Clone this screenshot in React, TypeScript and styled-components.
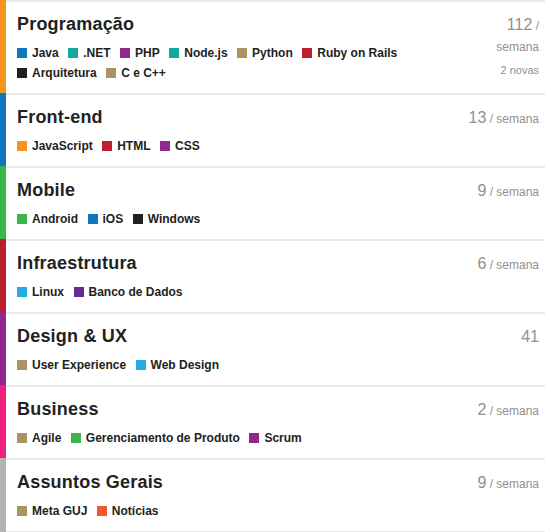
import { FC } from 'react';
import styled, { createGlobalStyle } from 'styled-components';

const GlobalStyle = createGlobalStyle`
    body {
        margin: 0;
        background: #fff;
        font-family: 'Liberation Sans', Arial, sans-serif;
        color: #222;
    }
`;

type ITag = { name: string; color: string };

type ICategory = {
    name: string;
    color: string;
    count: string;
    perWeek: boolean;
    news?: string;
    tags: ITag[];
};

const categories: ICategory[] = [
    {
        name: 'Programação',
        color: '#F7941D',
        count: '112',
        perWeek: true,
        news: '2 novas',
        tags: [
            { name: 'Java', color: '#0E76BD' },
            { name: '.NET', color: '#12A89D' },
            { name: 'PHP', color: '#92278F' },
            { name: 'Node.js', color: '#12A89D' },
            { name: 'Python', color: '#AB9364' },
            { name: 'Ruby on Rails', color: '#BF1E2E' },
            { name: 'Arquitetura', color: '#231F20' },
            { name: 'C e C++', color: '#AB9364' },
        ],
    },
    {
        name: 'Front-end',
        color: '#0E76BD',
        count: '13',
        perWeek: true,
        tags: [
            { name: 'JavaScript', color: '#F7941D' },
            { name: 'HTML', color: '#BF1E2E' },
            { name: 'CSS', color: '#92278F' },
        ],
    },
    {
        name: 'Mobile',
        color: '#3AB54A',
        count: '9',
        perWeek: true,
        tags: [
            { name: 'Android', color: '#3AB54A' },
            { name: 'iOS', color: '#0E76BD' },
            { name: 'Windows', color: '#231F20' },
        ],
    },
    {
        name: 'Infraestrutura',
        color: '#BF1E2E',
        count: '6',
        perWeek: true,
        tags: [
            { name: 'Linux', color: '#25AAE2' },
            { name: 'Banco de Dados', color: '#652D90' },
        ],
    },
    {
        name: 'Design & UX',
        color: '#92278F',
        count: '41',
        perWeek: false,
        tags: [
            { name: 'User Experience', color: '#AB9364' },
            { name: 'Web Design', color: '#25AAE2' },
        ],
    },
    {
        name: 'Business',
        color: '#ED207B',
        count: '2',
        perWeek: true,
        tags: [
            { name: 'Agile', color: '#AB9364' },
            { name: 'Gerenciamento de Produto', color: '#3AB54A' },
            { name: 'Scrum', color: '#92278F' },
        ],
    },
    {
        name: 'Assuntos Gerais',
        color: '#B3B5B4',
        count: '9',
        perWeek: true,
        tags: [
            { name: 'Meta GUJ', color: '#AB9364' },
            { name: 'Notícias', color: '#F1592A' },
        ],
    },
];

const List = styled.div`
    width: 545px;
`;

const Row = styled.div`
    display: flex;
    align-items: stretch;
`;

const Bar = styled.div<{ $color: string }>`
    flex: 0 0 6px;
    background: ${(p) => p.$color};
`;

const Body = styled.div<{ $last: boolean }>`
    flex: 1;
    display: flex;
    border-top: 2px solid #e9e9e9;
    border-bottom: ${(p) => (p.$last ? '2px solid #e9e9e9' : 'none')};
`;

const Main = styled.div`
    flex: 1;
    padding: 11px 10px 10px 11px;
`;

const Title = styled.h3`
    margin: 0;
    font-size: 18px;
    line-height: 22px;
    font-weight: bold;
    letter-spacing: 0.2px;
    color: #222;
`;

const Tags = styled.div`
    display: flex;
    flex-wrap: wrap;
    column-gap: 9.5px;
    margin-top: 8px;
`;

const Tag = styled.span`
    display: inline-flex;
    align-items: center;
    font-size: 12px;
    line-height: 20px;
    font-weight: bold;
    color: #222;
    white-space: nowrap;
`;

const Square = styled.span<{ $color: string }>`
    width: 10px;
    height: 10px;
    margin-right: 5px;
    background: ${(p) => p.$color};
`;

const Stats = styled.div`
    flex: 0 0 76px;
    padding: 13px 6px 0 0;
    text-align: right;
    color: #919191;
`;

const Count = styled.div`
    line-height: 20px;
`;

const Value = styled.span`
    font-size: 16px;
`;

const Unit = styled.span`
    font-size: 12px;
`;

const News = styled.div`
    margin-top: 4px;
    font-size: 11px;
    line-height: 18px;
`;

const CategoryRow: FC<{ category: ICategory; last: boolean }> = ({
    category,
    last,
}) => (
    <Row>
        <Bar $color={category.color} />
        <Body $last={last}>
            <Main>
                <Title>{category.name}</Title>
                <Tags>
                    {category.tags.map((tag) => (
                        <Tag key={tag.name}>
                            <Square $color={tag.color} />
                            {tag.name}
                        </Tag>
                    ))}
                </Tags>
            </Main>
            <Stats>
                <Count>
                    <Value>{category.count}</Value>
                    {category.perWeek ? <Unit> / semana</Unit> : null}
                </Count>
                {category.news ? <News>{category.news}</News> : null}
            </Stats>
        </Body>
    </Row>
);

const App: FC = () => (
    <>
        <GlobalStyle />
        <List>
            {categories.map((c, i) => (
                <CategoryRow
                    key={c.name}
                    category={c}
                    last={i === categories.length - 1}
                />
            ))}
        </List>
    </>
);

export default App;
